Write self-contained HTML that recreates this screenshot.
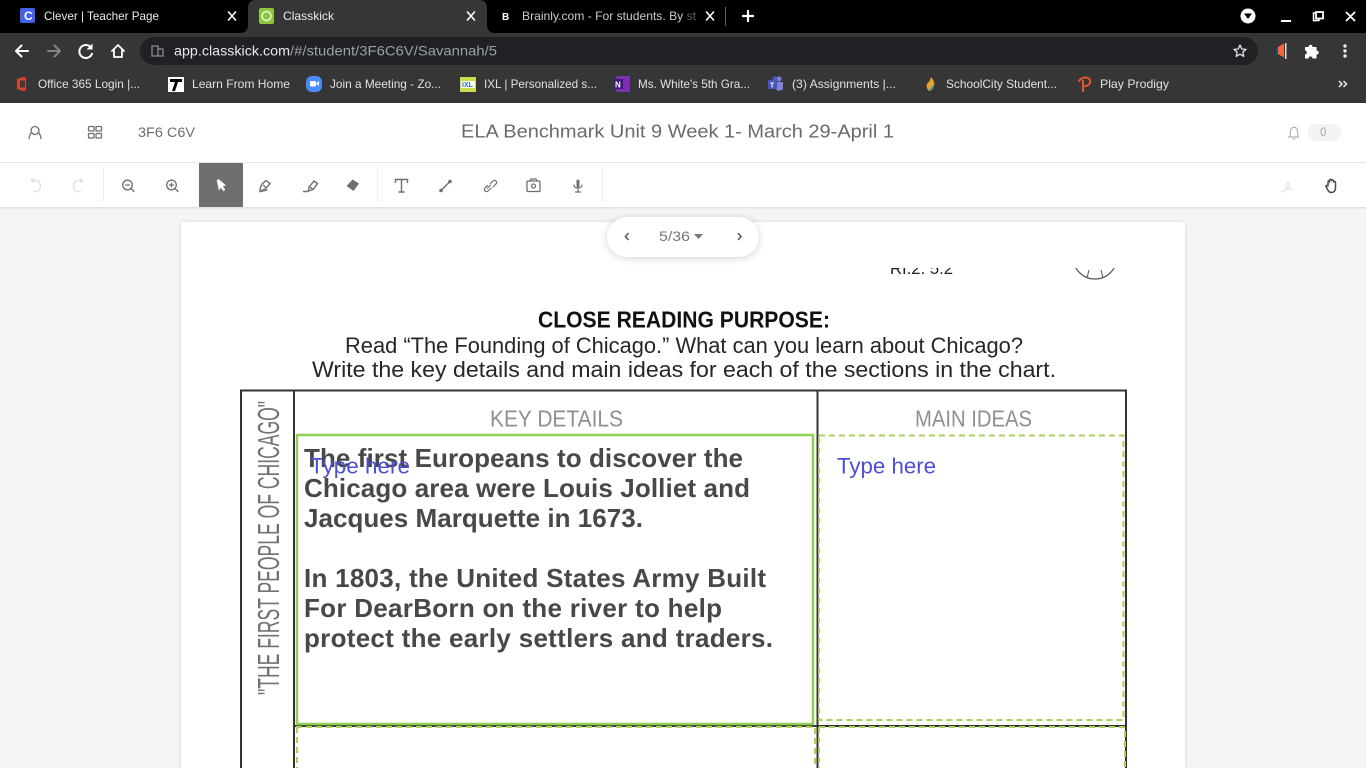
<!DOCTYPE html>
<html><head><meta charset="utf-8"><title>Classkick</title>
<style>
html,body{margin:0;padding:0;width:1366px;height:768px;overflow:hidden;background:#f5f5f5}
svg{display:block;position:absolute;left:0;top:0}
text{font-family:"Liberation Sans",sans-serif}
.t{font-size:12px;fill:#e8eaed}
.b{font-size:12px;fill:#dfe1e4}
.i{fill:none;stroke:#6f6f6f;stroke-width:1.3;stroke-linecap:round;stroke-linejoin:round}
.w{fill:none;stroke:#fff;stroke-width:2;stroke-linecap:round;stroke-linejoin:round}
.d{fill:none;stroke:#a9d25c;stroke-width:2;stroke-dasharray:6 4}
.k{fill:none;stroke:#333;stroke-width:2}
.body{font-size:26px;font-weight:bold;fill:#484848}
.cr{font-size:22.5px;fill:#262626}
</style></head><body>
<svg width="1366" height="768" viewBox="0 0 1366 768" xmlns="http://www.w3.org/2000/svg">
<!-- chrome -->
<rect width="1366" height="33" fill="#000"/>
<rect y="33" width="1366" height="70" fill="#363636"/>
<path d="M240 33c5 0 8-3 8-8V8c0-5 3-8 8-8h223c5 0 8 3 8 8v17c0 5 3 8 8 8z" fill="#363636"/>
<rect x="20" y="8" width="15" height="15" rx="2" fill="#4360e8"/>
<text x="24" y="20" font-size="12" font-weight="bold" fill="#fff">C</text>
<text class="t" x="44" y="20" textLength="115" lengthAdjust="spacingAndGlyphs">Clever | Teacher Page</text>
<path class="w" d="M228.500 12l7 8M235.500 12l-7 8" style="stroke-width:1.600"/>
<rect x="259" y="8" width="15" height="16" rx="2" fill="#8cc63f"/>
<circle cx="266.500" cy="16" r="4.500" fill="none" stroke="#e7f5d5" stroke-width="1.500"/>
<text class="t" x="283" y="20" textLength="51" lengthAdjust="spacingAndGlyphs">Classkick</text>
<path class="w" d="M467.500 12l7 8M474.500 12l-7 8" style="stroke-width:1.600"/>
<text x="502" y="20" font-size="10" font-weight="bold" fill="#fff">B</text>
<text class="t" x="522" y="20" textLength="174" lengthAdjust="spacingAndGlyphs" fill-opacity=".85">Brainly.com - For students. By st</text>
<rect x="684" y="0" width="14" height="33" fill="#000" fill-opacity=".55"/>
<path class="w" d="M706.500 12l7 8M713.500 12l-7 8" style="stroke-width:1.600"/>
<rect x="725" y="7" width="1" height="19" fill="#5f6368"/>
<path class="w" d="M748 10v12M742 16h12" style="stroke-width:2.200;stroke-linecap:butt"/>
<circle cx="1248" cy="16" r="7.500" fill="#fff"/>
<path d="M1244 13.500h8l-4 5.500z" fill="#000"/>
<rect x="1281" y="20" width="10" height="2" fill="#fff"/>
<path d="M1316 13h-2.500v8h-.1M1313.500 20.500h5.500V18" fill="none" stroke="#fff" stroke-width="1.500"/>
<rect x="1316" y="12" width="7" height="6.500" fill="none" stroke="#fff" stroke-width="1.800"/>
<path class="w" d="M1346 12l9 9M1355 12l-9 9" style="stroke-width:1.800;stroke-linecap:butt"/>

<path class="w" d="M16 51h12M21.500 45.500L16 51l5.500 5.500"/>
<path d="M48 51h12M54.500 45.500L60 51l-5.500 5.500" fill="none" stroke="#80868b" stroke-width="2" stroke-linecap="round" stroke-linejoin="round"/>
<path d="M91 47.500A6.500 6.500 0 1 0 92.200 53" fill="none" stroke="#fff" stroke-width="2"/>
<path d="M92.500 43.500v6h-6z" fill="#fff"/>
<path class="w" d="M112 51l6-6 6 6M114 50v7h8v-7" style="stroke-width:1.800"/>
<rect x="140" y="37" width="1118" height="28" rx="14" fill="#202124"/>
<path d="M152 46h6v10h-6zM158 49h5v7h-5z" fill="none" stroke="#8a8d91" stroke-width="1.300"/>
<text x="174" y="55.500" font-size="14" fill="#e8eaed" textLength="116" lengthAdjust="spacingAndGlyphs">app.classkick.com</text>
<text x="290" y="55.500" font-size="14" fill="#9aa0a6" textLength="207" lengthAdjust="spacingAndGlyphs">/#/student/3F6C6V/Savannah/5</text>
<path d="M1240 45l1.800 4 4.200.400-3.200 2.800 1 4.200-3.800-2.200-3.800 2.200 1-4.200-3.200-2.800 4.200-.400z" fill="none" stroke="#dfe1e4" stroke-width="1.300" stroke-linejoin="round"/>
<rect x="1276" y="47" width="3" height="8" fill="#1f4a72"/>
<path d="M1278 47l6-3.500v14l-6-3.500z" fill="#f0683a"/>
<rect x="1285" y="43" width="1.500" height="16" fill="#ddd"/>
<path d="M1305 47h3.500c0-3 4-3 4 0h4v3.500c3 0 3 4 0 4v4h-4c0-2.800-4-2.800-4 0h-3.500v-4c2.500 0 2.500-4 0-4z" fill="#fff"/>
<circle cx="1345" cy="46" r="1.700" fill="#e8eaed"/><circle cx="1345" cy="51" r="1.700" fill="#e8eaed"/><circle cx="1345" cy="56" r="1.700" fill="#e8eaed"/>

<!-- bookmarks -->
<path d="M17 79l6-2 3 .5v13l-3 .5-6-2z" fill="#d0452c"/><rect x="20" y="80.500" width="5" height="7" fill="#3b3b3b"/>
<text class="b" x="38" y="88" textLength="102" lengthAdjust="spacingAndGlyphs">Office 365 Login |...</text>
<rect x="168" y="77" width="16" height="15" fill="#fff"/>
<path d="M170 79h12v3h-4l-3 9h-3l3-9h-5z" fill="#000"/>
<text class="b" x="192" y="88" textLength="98" lengthAdjust="spacingAndGlyphs">Learn From Home</text>
<rect x="306" y="76" width="16" height="16" rx="6" fill="#4a8cff"/><rect x="310" y="81" width="6" height="5.500" rx="1" fill="#fff"/><path d="M316.500 83l2.500-2v5l-2.500-2z" fill="#fff"/>
<text class="b" x="330" y="88" textLength="111" lengthAdjust="spacingAndGlyphs">Join a Meeting - Zo...</text>
<rect x="460" y="77" width="16" height="15" fill="#cddc4a"/><rect x="461" y="81" width="14" height="7" fill="#fff"/>
<text x="462" y="87" font-size="7" font-weight="bold" fill="#2c6fb3">IXL</text>
<text class="b" x="484" y="88" textLength="113" lengthAdjust="spacingAndGlyphs">IXL | Personalized s...</text>
<rect x="616" y="76" width="14" height="16" rx="1" fill="#7c2fb0"/><rect x="614" y="79" width="9" height="10" fill="#3c1a75"/>
<text x="615" y="87.500" font-size="8" font-weight="bold" fill="#fff">N</text>
<text class="b" x="638" y="88" textLength="112" lengthAdjust="spacingAndGlyphs">Ms. White's 5th Gra...</text>
<circle cx="779" cy="79" r="2.500" fill="#7b83d6"/><circle cx="775" cy="79" r="2.500" fill="#5059c9"/><path d="M776 82h7v6c0 3-6 4-7 1z" fill="#7b83d6"/><rect x="768" y="80" width="9" height="9" rx="1" fill="#4b53bc"/>
<text x="770" y="87.500" font-size="7" font-weight="bold" fill="#fff">T</text>
<text class="b" x="792" y="88" textLength="104" lengthAdjust="spacingAndGlyphs">(3) Assignments |...</text>
<path d="M931 77c3 4 4 6 3 9-.500 3-3 5-5 5-2-2-3-5-2-7 1-1 3-3 4-7z" fill="#e8a12a"/><path d="M934 84c.500 3-2 6-5 7 0-2 3-3 5-7z" fill="#1f9bb8"/>
<text class="b" x="946" y="88" textLength="111" lengthAdjust="spacingAndGlyphs">SchoolCity Student...</text>
<path d="M1083 92V80M1079 82c1-5 9-6 11-2 1 4-3 7-7 6" fill="none" stroke="#e0592a" stroke-width="2"/>
<text class="b" x="1100" y="88" textLength="69" lengthAdjust="spacingAndGlyphs">Play Prodigy</text>
<path d="M1339 81l3 3-3 3M1343.500 81l3 3-3 3" fill="none" stroke="#e8eaed" stroke-width="1.500"/>

<!-- app header -->
<rect y="103" width="1366" height="60" fill="#fff"/>
<rect y="162" width="1366" height="1" fill="#e6e6e6"/>
<circle class="i" cx="35" cy="130.500" r="4"/>
<path class="i" d="M29 138.500c.5-3.500 1.800-5.500 3-6.200M41 138.500c-.5-3.500-1.800-5.500-3-6.200"/>
<rect class="i" x="88.500" y="126.500" width="5.500" height="4.500" rx=".8"/><rect class="i" x="96" y="126.500" width="5.500" height="4.500" rx=".8"/><rect class="i" x="88.500" y="133.500" width="5.500" height="4.500" rx=".8"/><rect class="i" x="96" y="133.500" width="5.500" height="4.500" rx=".8"/>
<text x="138" y="137" font-size="13.500" fill="#6c6c6c" textLength="57" lengthAdjust="spacingAndGlyphs">3F6 C6V</text>
<text x="461" y="137.500" font-size="18" fill="#6a6a6a" textLength="433" lengthAdjust="spacingAndGlyphs">ELA Benchmark Unit 9 Week 1- March 29-April 1</text>
<path d="M1288 137h11M1289.500 137c1-1.500 1-3 1-6 0-5 7-5 7 0 0 3 0 4.500 1 6M1292.500 139h3" fill="none" stroke="#b5b5b5" stroke-width="1.200"/>
<rect x="1308" y="124" width="33" height="17" rx="8.500" fill="#f3f3f3"/>
<text x="1320" y="136" font-size="11.500" fill="#a8a8a8">0</text>

<!-- toolbar -->
<rect y="163" width="1366" height="44" fill="#fff"/>
<rect y="207" width="1366" height="1.500" fill="#e2e2e2"/>
<path d="M31 180.500h5c6 0 6 11 0 11h-3M31 180.500l2.500-2M31 180.500l2.500 2" fill="none" stroke="#e2e2e2" stroke-width="1.500"/>
<path d="M83 180.500h-5c-6 0-6 11 0 11h3M83 180.500l-2.500-2M83 180.500l-2.500 2" fill="none" stroke="#e2e2e2" stroke-width="1.500"/>
<rect x="103" y="168" width="1" height="34" fill="#eee"/>
<circle class="i" cx="127.500" cy="185" r="4.800"/><path class="i" d="M131 188.500l3 3M125.500 185h4"/>
<circle class="i" cx="171.500" cy="185" r="4.800"/><path class="i" d="M175 188.500l3 3M169.500 185h4M171.500 183v4"/>
<rect x="199" y="163" width="44" height="44" fill="#6f6f6f"/>
<path d="M217 180.500l1.500-1.200 7 6-3 1 2.500 3.500-1.500 1-2.500-3.500-2 2.500z" fill="#fff" stroke="#e8e8e8" stroke-width=".6"/>
<path d="M260 191.500c0-3 1-6 2-7.500l4-3.500 4 3-4 5zM260.500 191.500l7-1.500M263 185l3 2.500" fill="none" stroke="#6f6f6f" stroke-width="1.400"/>
<path d="M303 191.500h5M308.500 191l.5-4 5-6 3.500 2.500-4.500 6zM310 187l3 2.500" fill="none" stroke="#6f6f6f" stroke-width="1.400"/>
<path d="M346.500 186l6-6.500 6.500 4-5.500 7.500z" fill="#6f6f6f"/>
<rect x="377" y="168" width="1" height="34" fill="#eee"/>
<path d="M395.500 183v-3.500h12v3.500M401.500 179.500v12.500M398.500 192h6" fill="none" stroke="#6f6f6f" stroke-width="1.400"/>
<path d="M441 190.500l9-9" stroke="#6f6f6f" stroke-width="1.500"/><circle cx="441" cy="190.500" r="1.800" fill="#6f6f6f"/><circle cx="450" cy="181.500" r="1.800" fill="#6f6f6f"/>
<path class="i" d="M488.500 186l-2.500 2.500c-2 2 1 5 3 3l3-3M491.500 184l2.500-2.500c2-2 5 1 3 3l-3 3M488.500 188.500l3-3" style="stroke-width:1.200" transform="translate(-1 -.5)"/>
<rect class="i" x="527" y="181" width="13" height="10.500" rx="1"/><path class="i" d="M530 181l1-2h5l1 2"/><circle class="i" cx="533.500" cy="186" r="2"/>
<rect x="576.500" y="179.500" width="3" height="8" rx="1.500" fill="#6f6f6f"/><path class="i" d="M574 185c0 4 8 4 8 0M578 189v2.500M575.500 192h5" style="stroke-width:1.200"/>
<rect x="602" y="168" width="1" height="34" fill="#eee"/>
<path d="M1281 192c4-1 10-6 8-9-2-2-3 3-3 5s2 2 6 0" fill="none" stroke="#e8e8e8" stroke-width="1.500"/>
<path d="M1328 186v-4c0-1.500 1.500-1.500 1.500 0v-1.500c0-1.500 2-1.500 2 0v0c0-1 2-1 2 .5v1c0-1 2-1 2 .5v5.500c0 3-2 4.500-4 4.500s-3-1-4-3l-1.500-3c-.5-1 1-1.500 2-.5z" fill="#fff" stroke="#4a4a4a" stroke-width="1.500" stroke-linejoin="round"/>

<!-- paper -->
<rect x="181" y="222" width="1004" height="546" fill="#fff" style="filter:drop-shadow(0 0 2px rgba(0,0,0,.12))"/>

<!-- clipped worksheet top -->
<clipPath id="cp"><rect x="880" y="268" width="250" height="12"/></clipPath>
<g clip-path="url(#cp)">
<text x="890" y="274" font-size="17" fill="#222" textLength="63" lengthAdjust="spacingAndGlyphs">RI.2. 5.2</text>
<circle cx="1095" cy="257" r="22" fill="none" stroke="#555" stroke-width="1.200"/>
<path d="M1089 270l-2 8M1101 270l2 8" stroke="#555" fill="none"/>
</g>

<text x="538" y="327.500" font-size="23" font-weight="bold" fill="#111" textLength="292" lengthAdjust="spacingAndGlyphs">CLOSE READING PURPOSE:</text>
<text class="cr" x="345" y="353" textLength="678" lengthAdjust="spacingAndGlyphs">Read “The Founding of Chicago.” What can you learn about Chicago?</text>
<text class="cr" x="312" y="377" textLength="744" lengthAdjust="spacingAndGlyphs">Write the key details and main ideas for each of the sections in the chart.</text>

<!-- table lines -->
<path class="k" d="M241 768V390.500H1126V768M294 390V768M817.500 390V768M294 726H1127"/>
<text x="490" y="426.500" font-size="23" fill="#6a6a6a" textLength="133" lengthAdjust="spacingAndGlyphs" opacity=".75">KEY DETAILS</text>
<text x="915" y="426.500" font-size="23" fill="#6a6a6a" textLength="117" lengthAdjust="spacingAndGlyphs" opacity=".75">MAIN IDEAS</text>
<text transform="translate(279 695) rotate(-90)" font-size="31" fill="#5a5a5a" textLength="294" lengthAdjust="spacingAndGlyphs" opacity=".85">"THE FIRST PEOPLE OF CHICAGO"</text>

<!-- answer boxes -->
<rect x="297" y="435" width="516" height="289" fill="none" stroke="#90cf55" stroke-width="2.500"/>
<path class="d" d="M819 435.500H1123.500V720H819V435.500"/>
<path class="d" d="M296 727H815V768M297 727V768M819 727H1125V768M819 727V768"/>

<text class="body" x="304" y="467" textLength="439" lengthAdjust="spacing">The first Europeans to discover the</text>
<text class="body" x="304" y="497" textLength="446" lengthAdjust="spacing">Chicago area were Louis Jolliet and</text>
<text class="body" x="304" y="527" textLength="339" lengthAdjust="spacing">Jacques Marquette in 1673.</text>
<text class="body" x="304" y="587" textLength="462" lengthAdjust="spacing">In 1803, the United States Army Built</text>
<text class="body" x="304" y="617" textLength="418" lengthAdjust="spacing">For DearBorn on the river to help</text>
<text class="body" x="304" y="647" textLength="469" lengthAdjust="spacing">protect the early settlers and traders.</text>

<text x="310" y="473.500" font-size="22" fill="#4e4ed6" textLength="100" lengthAdjust="spacingAndGlyphs">Type here</text>
<text x="837" y="473.500" font-size="22" fill="#4e4ed6" textLength="99" lengthAdjust="spacingAndGlyphs">Type here</text>

<!-- pager -->
<rect x="607" y="217" width="152" height="40" rx="20" fill="#fff" style="filter:drop-shadow(0 1px 4px rgba(0,0,0,.18))"/>
<path d="M628.500 233l-3 3.500 3 3.500" fill="none" stroke="#555" stroke-width="1.500"/>
<path d="M738 233l3 3.500-3 3.500" fill="none" stroke="#555" stroke-width="1.500"/>
<text x="659" y="241" font-size="13.500" fill="#777" textLength="31" lengthAdjust="spacingAndGlyphs">5/36</text>
<path d="M694 234h9l-4.500 5z" fill="#777"/>
</svg>
</body></html>
